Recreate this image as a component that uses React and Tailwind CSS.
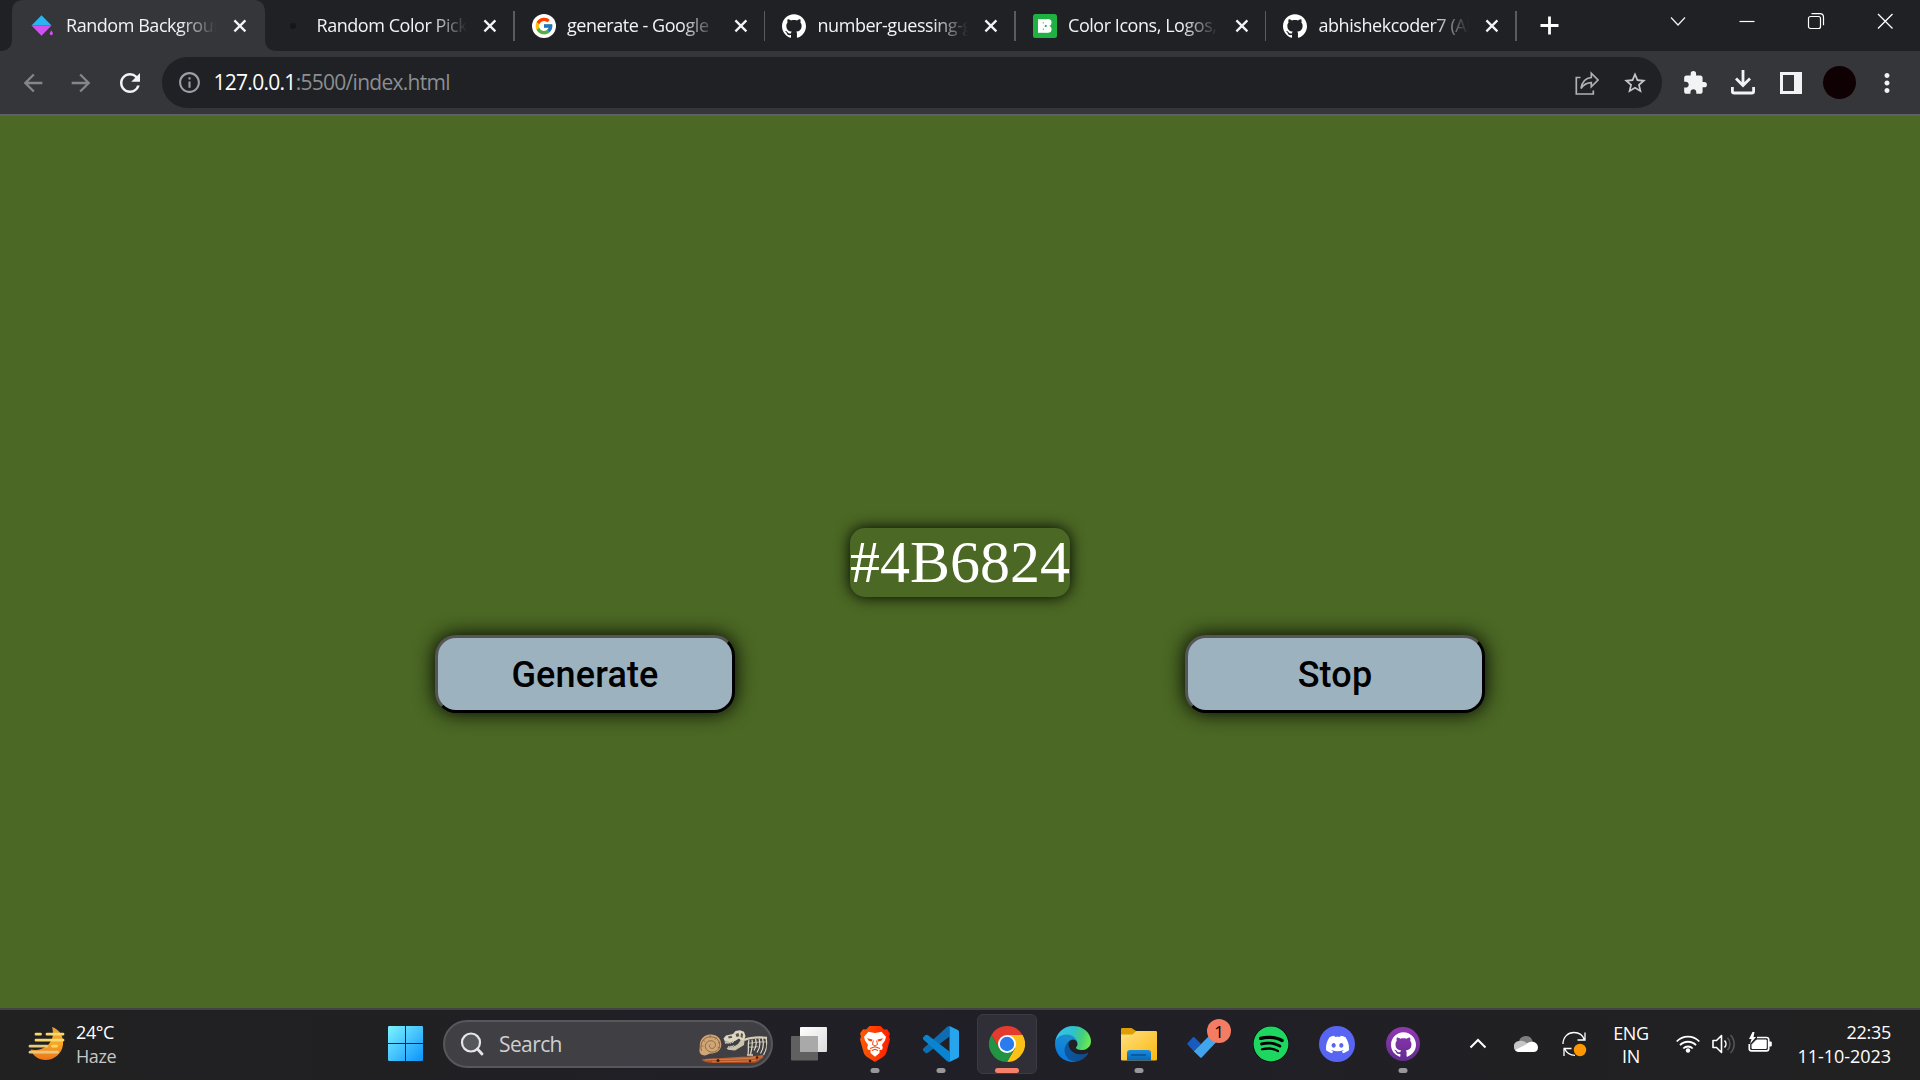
import React from "react";
import { MdArrowBack, MdArrowForward, MdRefresh, MdInfoOutline, MdStarBorder, MdExtension, MdMoreVert } from "react-icons/md";
import { FaSpotify } from "react-icons/fa";
import { FcGoogle } from "react-icons/fc";
import { SiDiscord, SiGithub } from "react-icons/si";

const PaintIcon = () => (
  <svg width="24" height="24" viewBox="0 0 24 24">
    <path d="M.5 11.5 10.5 1.2 20.5 11.5Z" fill="#29b6f0" />
    <path d="M.5 11.5h20L10.5 21.7Z" fill="#d150f2" />
    <path d="M20.3 16.6c1 1.4 1.6 2.2 1.6 3a1.6 1.6 0 0 1-3.2 0c0-.8.6-1.6 1.6-3Z" fill="#d150f2" />
  </svg>
);

const DotIcon = () => (
  <span className="flex size-6 items-center justify-center">
    <span className="size-1.5 rounded-full bg-[#141618]" />
  </span>
);

const GoogleIcon = () => (
  <span className="flex size-6 items-center justify-center rounded-full bg-white">
    <FcGoogle size={20} />
  </span>
);

const Icons8Icon = () => (
  <svg width="24" height="24" viewBox="0 0 24 24">
    <rect width="24" height="24" rx="2.5" fill="#1fb141" />
    <path d="M5 5.200h7.200v13.600H5Z" fill="#fff" />
    <circle cx="15" cy="8.600" r="3.500" fill="#fff" />
    <circle cx="15" cy="15.300" r="3.500" fill="#fff" />
    <path d="M12 5.500h2.500v4.500H12ZM12 14h2.500v4.800H12Z" fill="#fff" />
    <path d="M10.300 8v1.500M10.300 14.500V16" stroke="#1fb141" strokeWidth=".8" />
    <circle cx="12.700" cy="12" r="1.100" fill="#1fb141" />
  </svg>
);

const CrossIcon = () => (
  <svg width="14" height="14" viewBox="0 0 14 14" className="shrink-0">
    <path d="M1.4 1.4 12.4 12.4M12.4 1.4 1.4 12.4" stroke="#f1f3f4" strokeWidth="2.3" />
  </svg>
);

const tabs = [
  { title: "Random Backgroun", icon: <PaintIcon />, active: true },
  { title: "Random Color Pick", icon: <DotIcon /> },
  { title: "generate - Google", icon: <GoogleIcon /> },
  { title: "number-guessing-g", icon: <SiGithub size={24} color="#fff" /> },
  { title: "Color Icons, Logos,", icon: <Icons8Icon /> },
  { title: "abhishekcoder7 (Ab", icon: <SiGithub size={24} color="#fff" /> },
];

function Tab({ tab }) {
  return (
    <div className="relative flex h-[51px] w-[250.5px] shrink-0 items-center">
      {tab.active && (
        <svg className="absolute -left-[13.5px] top-0" width="290" height="51" viewBox="0 0 290 51">
          <path d="M0 51C8 51 12 47 12 39V12C12 4 16 0 24 0H253C261 0 265 4 265 12V39C265 47 269 51 277 51Z" fill="#35363a" />
        </svg>
      )}
      <div className="relative ml-[17px] mt-px flex w-6 shrink-0">{tab.icon}</div>
      <div className="relative mb-px ml-[11.5px] w-[150px] overflow-hidden whitespace-nowrap text-[18px] leading-6 tracking-[-0.45px] text-[#f1f3f4] [mask-image:linear-gradient(to_right,black_76%,transparent_100%)]">
        {tab.title}
      </div>
      <div className="relative ml-[16.5px] mt-px">
        <CrossIcon />
      </div>
      {!tab.active && <div className="absolute right-0 top-[11px] h-[30px] w-[1.5px] bg-[#5a5b5f]" />}
    </div>
  );
}

function WindowControls() {
  return (
    <div className="ml-auto mr-[26px] flex h-[42px] items-center gap-[51px]">
      <svg width="18" height="18" viewBox="0 0 18 18" fill="none" stroke="#f1f3f4" strokeWidth="1.2">
        <path d="m2 5.500 7 7.500 7-7.500" />
      </svg>
      <svg width="18" height="18" viewBox="0 0 18 18" fill="none" stroke="#fff" strokeWidth="1.2">
        <path d="M1.5 9.5h15" />
      </svg>
      <svg width="18" height="18" viewBox="0 0 18 18" fill="none" stroke="#fff" strokeWidth="1.2">
        <rect x="1.5" y="4.5" width="12" height="12" rx="2" />
        <path d="M4.5 1.7H13A3.6 3.6 0 0 1 16.5 5.2v8" />
      </svg>
      <svg width="18" height="18" viewBox="0 0 18 18" fill="none" stroke="#fff" strokeWidth="1.3">
        <path d="m2 2 14.5 14.5M16.5 2 2 16.5" />
      </svg>
    </div>
  );
}

function Toolbar() {
  return (
    <div className="flex h-[63px] items-center bg-[#35363a]">
      <div className="flex w-[162px] items-center gap-5 pl-[19px]">
        <MdArrowBack size={28} color="#85868a" />
        <MdArrowForward size={28} color="#85868a" />
        <MdRefresh size={30} color="#f1f3f4" />
      </div>
      <div className="flex h-[51px] w-[1500px] items-center rounded-full bg-[#202124] pl-[15px]">
        <MdInfoOutline size={25} color="#9aa0a6" />
        <div className="mb-px ml-[11.5px] text-[21px] leading-6 tracking-[-0.72px] text-[#8b8e92]">
          <span className="text-white">127.0.0.1</span>:5500/index.html
        </div>
        <div className="ml-auto mr-[14px] flex items-center gap-[23px]">
          <svg width="24" height="24" viewBox="0 0 24 24" fill="none" stroke="#b0b1b3" strokeWidth="1.7">
            <path d="M5.5 6.5H1.3V23h17v-3.5" />
            <path d="M6 17.5C7 11 11 7 16.3 6.500V2.200L23 9l-6.700 6.800v-4.200C12 11.600 9 13 6 17.500Z" />
          </svg>
          <MdStarBorder size={26} color="#c4c6c9" />
        </div>
      </div>
      <div className="ml-[20px] flex items-center">
        <MdExtension size={26} color="#f1f3f4" />
        <svg className="ml-[23px]" width="24" height="25" viewBox="0 0 24 25" fill="none" stroke="#f1f3f4" strokeWidth="2.800">
          <path d="M12 0v15M5 8.500l7 7 7-7M1.400 17v4.200a1.800 1.800 0 0 0 1.800 1.800h17.600a1.800 1.800 0 0 0 1.800-1.800V17" />
        </svg>
        <svg className="ml-[25px]" width="22" height="22" viewBox="0 0 22 22">
          <path d="M0 0h22v22H0ZM3 3v16h11V3Z" fill="#f1f3f4" fillRule="evenodd" />
        </svg>
        <div className="ml-[21px] size-[33px] rounded-full bg-[#0e0003]" />
        <MdMoreVert size={30} color="#f1f3f4" className="ml-[16px]" />
      </div>
    </div>
  );
}

function ActionButton({ children }) {
  return (
    <button className="h-[78px] w-[300px] rounded-[21px] border-[3px] border-b-black border-l-[#555] border-r-black border-t-[#555] bg-[#9db2bf] pt-px font-['Roboto'] text-[36px] font-medium leading-none tracking-[0.15px] text-black shadow-[0_0_20px_#000]">
      {children}
    </button>
  );
}

const WeatherIcon = () => (
  <svg width="38" height="36" viewBox="0 0 38 36">
    <defs>
      <linearGradient id="moon" x1="0" y1="0" x2="0" y2="1">
        <stop offset="0" stopColor="#e0a53a" />
        <stop offset=".5" stopColor="#f7a723" />
        <stop offset="1" stopColor="#ef7418" />
      </linearGradient>
    </defs>
    <path d="M24 1C31 3 36 10 35 18.500 34 28 26 34 17.500 34 11 34 5 30 2.500 23.500 8 24.500 15 24 20 19 25 14 26 7 24 1Z" fill="url(#moon)" />
    <path d="M8 8.200h4.500M19 8.200h16M8 14.200h27M24.500 20.200h4" stroke="#f8d76e" strokeWidth="2.800" strokeLinecap="round" />
    <path d="M2 20.200h17M2 26.200h27.500" stroke="#e8c983" strokeWidth="2.800" strokeLinecap="round" />
  </svg>
);

const WindowsLogo = () => (
  <svg width="36" height="36" viewBox="0 0 36 36">
    <defs>
      <linearGradient id="win" gradientUnits="userSpaceOnUse" x1="0" y1="0" x2="35" y2="35">
        <stop offset="0" stopColor="#7cf3ff" />
        <stop offset=".5" stopColor="#46c4fd" />
        <stop offset="1" stopColor="#0a93fb" />
      </linearGradient>
    </defs>
    <path fill="url(#win)" d="M1.200 0H17v17H0V1.200A1.200 1.200 0 0 1 1.200 0ZM18 0h15.800A1.200 1.200 0 0 1 35 1.200V17H18ZM0 18h17v17H1.200A1.200 1.200 0 0 1 0 33.800ZM18 18h17v15.800a1.200 1.200 0 0 1-1.200 1.200H18Z" />
  </svg>
);

const FossilArt = () => (
  <svg width="72" height="36" viewBox="0 0 72 36">
    <defs>
      <linearGradient id="log" x1="0" y1="0" x2="0" y2="1">
        <stop offset="0" stopColor="#c4703d" />
        <stop offset="1" stopColor="#a8481c" />
      </linearGradient>
    </defs>
    <path d="M4 29.500C10 28 22 28.500 32 27.500S52 27 65 25c1 2-1 4-3 4.500-1 2-3 3-6 3.500H12C8 32 4 31.500 4 29.500Z" fill="url(#log)" />
    <path d="M7 30c14-1 30 0 52-2.500M14 32c16-1 28 0 44-1.500" stroke="#e0945c" strokeWidth=".7" fill="none" />
    <circle cx="20" cy="30.500" r="1.500" fill="#3a1a0c" />
    <circle cx="52" cy="31" r="1.200" fill="#3a1a0c" />
    <circle cx="59" cy="27.500" r="1.200" fill="#3a1a0c" />
    <path d="M12 4.500C18 4 23.500 8 23.300 15c-.5 6.500-6 8.500-10.500 8.500-2 0-3 1.500-6 2C3 25.500 1 22.500 1.500 19.500c.5-2 0-3.500.5-6.500C3 8 7 5 12 4.500Z" fill="#cfa678" />
    <path d="M3.500 21C1 13 6 6.500 13 6.800c6 .2 9.500 4.700 8.500 9.700-1 4.500-5.500 6.500-9.500 5.300-4.500-1.300-6-5.800-3.500-9 2.300-3 7.200-2.600 8.600.4 1.200 2.700-.6 5.500-3.300 5.200-2.200-.2-3.200-2.600-1.600-4" stroke="#96683c" strokeWidth="1" fill="none" />
    <path d="M5 10 7 11.500M12 5l.3 2.500M18.500 7.500 17 9.500M22.500 12l-2.500 1M22 18l-2.500-1M3 16h2.500" stroke="#8a5f37" strokeWidth=".7" />
    <path d="M25.500 8.500 28 5.500 35 4 37.500 1 42 .3 46 1.800 47.500 6 46 11l-3-.500-2-2-4 2.500-5 1-5-.500Z" fill="#ddd7c2" />
    <path d="m30 6.500 3.500-.8.8 2-3.500.9ZM37.500 4l3-1 .8 3.200-2.800.8ZM43 3l2 1-.5 4-2-1Z" fill="#5a5447" />
    <path d="M43 9.500 46.500 10.500 46 15 42 17.500 37 20.500 30 19.800 28.500 18 35 17l5-3Z" fill="#cbc4ab" />
    <path d="m27 11.500.8 2.200 1.200-2 1 2 1.200-2.200 1 2 1.300-2.300 1 1.800 1.200-2M30 18l.8-1.800 1.200 1.500 1-1.800 1.200 1.300 1-1.800 1.200 1" stroke="#f0ead8" strokeWidth=".8" fill="none" />
    <path d="M46 10c6-2.500 14-3 23-2.200" stroke="#d4ceb9" strokeWidth="2.200" fill="none" />
    <path d="M50 13.500c6-1.500 13-1.800 18.500-1.500M50 17c4 0 7 .5 10-.5" stroke="#a29c88" strokeWidth="1.200" fill="none" />
    <path d="M51 10c-1.500 5 0 9-1 14.500M54 9.500c.8 5 0 9.500-1.500 15M57.500 9c1.500 5 .8 8-1.500 11.500M61 8.500c1.600 5 .8 10-2 14M64.500 8c1.500 6 1 11-2 15.500M68 8c1.500 7 1 11-2.500 17" stroke="#e0dbc9" strokeWidth="1.200" fill="none" />
    <path d="M49 25h6" stroke="#d8d2bf" strokeWidth="1.500" />
  </svg>
);

const TaskViewIcon = () => (
  <svg width="36" height="36" viewBox="0 0 36 36">
    <defs>
      <linearGradient id="tvFront" x1="0" y1="0" x2="1" y2="1">
        <stop offset="0" stopColor="#fff" />
        <stop offset="1" stopColor="#dcdcdc" />
      </linearGradient>
    </defs>
    <rect x="0" y="10" width="27" height="24.500" rx="1" fill="#606060" />
    <rect x="9" y="1" width="27" height="25" rx="1" fill="url(#tvFront)" />
    <rect x="9" y="10" width="18" height="16" fill="#a9a9a9" />
  </svg>
);

const BraveIcon = () => (
  <svg width="30" height="36" viewBox="0 0 30 36">
    <defs>
      <linearGradient id="brave" x1="0" y1="0" x2="1" y2="0">
        <stop offset="0" stopColor="#ff5a00" />
        <stop offset=".45" stopColor="#ff4000" />
        <stop offset="1" stopColor="#ff1f00" />
      </linearGradient>
    </defs>
    <path d="M9.500 0h11l3.500 3.500 3-.3L30 7.500l-1 3 1 3L26.500 26c-.6 2.500-2 4-4 5.300L15 36l-7.500-4.700c-2-1.300-3.400-2.800-4-5.300L0 13.500l1-3-1-3 3-4.300 3 .3Z" fill="url(#brave)" />
    <path d="M8.500 5.800 12 6.500 15 7l3-.5 3.500-.7L26 10.800l-1 3.700-3 4.200.8 3-.8 2-2.500.3L19.500 27 15 30.800 10.500 27l0-3L8 23.700l-.8-2 .8-3-3-4.200-1-3.700Z" fill="#fff" />
    <path d="M7 12.300 12.500 13.500 11.800 15.500 8.800 14.800ZM23 12.300 17.500 13.500 18.200 15.500 21.200 14.800Z" fill="#ff4000" />
    <path d="M13.300 14.500 12.500 18.500 15 20l2.500-1.500-.8-4" fill="none" stroke="#ff4000" strokeWidth="1" />
    <path d="M10 22.500 15 20.800l5 1.700M12 24.500l3-1.200 3 1.200" fill="none" stroke="#ff4000" strokeWidth="1.200" />
  </svg>
);

const CodeIcon = () => (
  <svg width="36" height="36" viewBox="0 0 36 36">
    <path d="M26.500 0v10.500L5 26.700a2.200 2.200 0 0 1-2.800 0L.600 25a1.800 1.800 0 0 1 0-2.700L24.500.600Z" fill="#0f6cb0" />
    <path d="M26.500 36V25.500L5 9.300a2.200 2.200 0 0 0-2.800 0L.600 11a1.800 1.800 0 0 0 0 2.700l23.900 21.700Z" fill="#0b84cf" />
    <path d="M26.500 0 34.800 4A2 2 0 0 1 36 5.900v24.200a2 2 0 0 1-1.200 1.900L26.500 36Z" fill="#27a4ee" />
  </svg>
);

const ChromeIcon = () => (
  <svg width="36" height="36" viewBox="0 0 48 48">
    <path d="M3.200 12A24 24 0 0 1 44.800 12H24L13.600 30Z" fill="#e33b2e" />
    <path d="M44.800 12A24 24 0 0 1 24 48L34.400 30 24 12Z" fill="#fbc116" />
    <path d="M24 48A24 24 0 0 1 3.200 12L13.600 30H34.400Z" fill="#229342" />
    <circle cx="24" cy="24" r="12" fill="#fff" />
    <circle cx="24" cy="24" r="9.600" fill="#2a7bf0" />
  </svg>
);

const EdgeIcon = () => (
  <svg width="36" height="36" viewBox="0 0 256 256">
    <defs>
      <linearGradient id="edgeA" gradientUnits="userSpaceOnUse" x1="60" y1="180" x2="235" y2="180">
        <stop offset="0" stopColor="#0c59a4" />
        <stop offset="1" stopColor="#114a8b" />
      </linearGradient>
      <linearGradient id="edgeB" gradientUnits="userSpaceOnUse" x1="100" y1="60" x2="50" y2="220">
        <stop offset="0" stopColor="#1b8fd0" />
        <stop offset="1" stopColor="#0a7bdc" />
      </linearGradient>
      <linearGradient id="edgeC" gradientUnits="userSpaceOnUse" x1="20" y1="40" x2="245" y2="110">
        <stop offset="0" stopColor="#35c1f1" />
        <stop offset=".45" stopColor="#2fc2c8" />
        <stop offset=".75" stopColor="#46ce7a" />
        <stop offset="1" stopColor="#66eb55" />
      </linearGradient>
    </defs>
    <path fill="url(#edgeA)" d="M231 190.500c-3.400 1.800-6.900 3.400-10.500 4.700a101.800 101.800 0 0 1-35.900 6.400c-47.300 0-88.500-32.500-88.500-74.300 0-11.400 6.400-21.900 16.400-27.300-42.800 1.800-53.800 46.400-53.800 72.500 0 74 68.100 81.400 82.800 81.400 7.900 0 19.800-2.300 27-4.600l1.300-.400a128.300 128.300 0 0 0 66.600-52.800 4 4 0 0 0-5.400-5.600z" />
    <path fill="url(#edgeB)" d="M105.700 241.400a79.200 79.200 0 0 1-22.700-21.300 80.700 80.700 0 0 1 29.500-120c3.200-1.500 8.500-4.100 15.600-4a32.400 32.400 0 0 1 25.700 13 31.900 31.900 0 0 1 6.300 18.700c0-.200 24.500-79.600-80-79.600-43.900 0-80 41.600-80 78.200a130.200 130.200 0 0 0 12.100 56 128 128 0 0 0 156.400 67 75.600 75.600 0 0 1-62.800-8z" />
    <path fill="url(#edgeC)" d="M152.300 148.900c-.900 1-3.400 2.500-3.400 5.600 0 2.600 1.700 5.200 4.800 7.300 14.300 10 41.400 8.600 41.500 8.600a59.600 59.600 0 0 0 30.300-8.300 61.400 61.400 0 0 0 30.400-52.900c.3-22.400-8-37.300-11.300-43.900C223.500 23.900 177.700 0 128 0A128 128 0 0 0 0 126.200c.500-36.500 36.800-66 80-66 3.500 0 23.500.300 42 10a72.600 72.600 0 0 1 30.900 29.300c6.100 10.600 7.200 24.100 7.200 29.500 0 5.400-2.700 13.300-7.800 19.900z" />
  </svg>
);

const FolderIcon = () => (
  <svg width="36" height="36" viewBox="0 0 36 36">
    <defs>
      <linearGradient id="folder" x1="0" y1="0" x2="1" y2="1">
        <stop offset="0" stopColor="#ffe082" />
        <stop offset="1" stopColor="#fbb80c" />
      </linearGradient>
      <linearGradient id="tray" x1="0" y1="0" x2="0" y2="1">
        <stop offset="0" stopColor="#1a8de0" />
        <stop offset="1" stopColor="#0b66b5" />
      </linearGradient>
    </defs>
    <path d="M0 3.200A1.200 1.200 0 0 1 1.200 2H10.500l5 3.200V12H0Z" fill="#dd9f05" />
    <path d="M0 8.500h11.500L15.300 5H34.800A1.200 1.200 0 0 1 36 6.200V33.300A1.200 1.200 0 0 1 34.800 34.500H1.200A1.200 1.200 0 0 1 0 33.300Z" fill="url(#folder)" />
    <path d="M6 34.500V27a3 3 0 0 1 3-3H27a3 3 0 0 1 3 3v7.500Z" fill="url(#tray)" />
    <path d="M10.500 29h14" stroke="#0b4f91" strokeWidth="1.400" strokeLinecap="round" />
  </svg>
);

const TodoIcon = () => (
  <svg width="36" height="36" viewBox="0 0 36 36">
    <path d="M.6 17 6 11.200a1 1 0 0 1 1.400 0L14 18l-7.200 7.200L.6 18.400a1 1 0 0 1 0-1.400Z" fill="#185abd" />
    <path d="M6.800 25.200 28.500 3.500a1 1 0 0 1 1.400 0L35 8.500a1 1 0 0 1 0 1.400L14.700 31.600a1 1 0 0 1-1.400 0Z" fill="#41a5ee" />
  </svg>
);

const SpotifyIcon = () => (
  <span className="flex size-[36px] rounded-full bg-black">
    <FaSpotify size={36} color="#1ed760" />
  </span>
);

const DiscordIcon = () => (
  <span className="flex size-9 items-center justify-center rounded-full bg-[#5865f2]">
    <SiDiscord size={23} color="#fff" />
  </span>
);

const GithubDesktopIcon = () => (
  <span className="flex size-[34px] items-center justify-center rounded-full bg-linear-to-b from-[#9437b3] to-[#612c90]">
    <SiGithub size={25} color="#fff" />
  </span>
);

const apps = [
  { icon: <BraveIcon />, open: true },
  { icon: <CodeIcon />, open: true },
  { icon: <ChromeIcon />, current: true },
  { icon: <EdgeIcon /> },
  { icon: <FolderIcon />, open: true },
  { icon: <TodoIcon />, badge: "1" },
  { icon: <SpotifyIcon /> },
  { icon: <DiscordIcon /> },
  { icon: <GithubDesktopIcon />, open: true },
];

function AppButton({ app }) {
  return (
    <div
      className={
        app.current
          ? "relative mx-[3px] flex size-[60px] items-center justify-center rounded-md border border-[#3c3b44] bg-[#302f37]"
          : "relative mx-[3px] flex size-[60px] items-center justify-center"
      }
    >
      {app.icon}
      {app.badge && (
        <div className="absolute left-[32px] top-[5px] flex size-6 items-center justify-center rounded-full bg-[#f47c62] text-[17px] leading-none text-black">
          {app.badge}
        </div>
      )}
      {app.open && <div className="absolute bottom-px left-1/2 h-[5px] w-[9px] -translate-x-1/2 rounded-full bg-[#98979b]" />}
      {app.current && <div className="absolute bottom-0 left-1/2 h-[5px] w-6 -translate-x-1/2 rounded-full bg-[#f6806a]" />}
    </div>
  );
}

function SystemTray() {
  return (
    <div className="ml-auto mr-[29px] flex h-full items-center text-white">
      <svg width="18" height="18" viewBox="0 0 18 18" fill="none" stroke="#fff" strokeWidth="2">
        <path d="m1.500 12.500 7.500-7.500 7.500 7.500" />
      </svg>
      <svg className="ml-[27px]" width="24" height="16" viewBox="0 0 24 16">
        <path d="M5 5.500A7 7 0 0 1 18.500 5L20 9 6 11Z" fill="#7e7e7e" />
        <path d="M5.500 16A5.500 5.500 0 0 1 5 5c4-.8 6 .6 8 2.500L20 13l-3 3Z" fill="#c6c6c6" />
        <path d="M12 8.500C15 4 24 5 24 11.500c0 3-2 4.500-4.500 4.500h-14C3.500 16 2 15.500 1 14Z" fill="#fff" />
      </svg>
      <svg className="ml-[24px]" width="25" height="26" viewBox="0 0 25 26" fill="none" stroke="#fff" strokeWidth="1.300">
        <path d="M1 13C1 6 6 1.500 12 1.500c5 0 9 3 10.500 7.500M23 1.500v7.500h-7.500M2 25v-7.500h7.500M2.500 17.500C4.500 22 8 24.300 13 24.300" />
        <circle cx="18" cy="19" r="6.200" fill="#ff9800" stroke="none" />
      </svg>
      <div className="mt-px ml-[26px] w-[36px] text-center text-[18px] leading-[23px] tracking-[-0.3px]">
        <div>ENG</div>
        <div>IN</div>
      </div>
      <svg className="ml-[27px]" width="24" height="18" viewBox="0 0 24 18" fill="none" stroke="#fff" strokeWidth="1.800">
        <path d="M.700 6.500A15.500 15.500 0 0 1 23.300 6.500M4 10.200a11 11 0 0 1 16 0M7.300 13.500a6.500 6.500 0 0 1 9.400 0" />
        <circle cx="12" cy="15.500" r="2.200" fill="#fff" stroke="none" />
      </svg>
      <svg className="ml-[12px]" width="24" height="22" viewBox="0 0 24 22" fill="none" stroke="#fff" strokeWidth="1.600">
        <path d="M1 7.500h3.500L9.500 2.500v17l-5-5H1Z" strokeLinejoin="round" />
        <path d="M12.500 7.500a5 5 0 0 1 0 7" />
        <path d="M15.500 4.800a9 9 0 0 1 0 12.400M18.500 2a13 13 0 0 1 0 18" stroke="#565656" />
      </svg>
      <svg className="mb-[3px] ml-[12px]" width="25" height="22" viewBox="0 0 25 22">
        <path d="M9 5.500h9.500a2.200 2.200 0 0 1 2.200 2.200v9a2.200 2.200 0 0 1-2.200 2.200h-15a2.200 2.200 0 0 1-2.200-2.200V12" fill="none" stroke="#fff" strokeWidth="1.700" />
        <path d="M8.500 8h9.700v8.500H4V12.500Z" fill="#fff" stroke="#fff" strokeLinejoin="round" />
        <path d="M21 9.500h1.800a1 1 0 0 1 1 1v3a1 1 0 0 1-1 1H21Z" fill="#fff" />
        <path d="M4.500 0 1 7h2.500L2 12l6-7H5.500l1-5Z" fill="#fff" />
      </svg>
      <div className="mb-px ml-[24px] w-[94px] whitespace-nowrap text-right text-[18px] leading-6 tracking-[-0.05px]">
        <div className="tracking-[-0.3px]">22:35</div>
        <div>11-10-2023</div>
      </div>
    </div>
  );
}

function Taskbar() {
  return (
    <div className="flex h-[72px] items-center border-t-2 border-[#434343] bg-linear-to-r from-[#212121] via-[#201f27] to-[#212121] pb-[2px]">
      <div className="flex w-[388px] items-center pl-[28px]">
        <WeatherIcon />
        <div className="mb-px ml-[10px] text-[18px] leading-6 tracking-[-0.4px] text-white">
          <div>24°C</div>
          <div className="text-[#c6c6c6]">Haze</div>
        </div>
      </div>
      <WindowsLogo />
      <div className="ml-[19px] flex h-[48px] w-[330px] items-center rounded-full border-2 border-[#58575c] bg-[#403f44] pl-[15px]">
        <svg width="24" height="24" viewBox="0 0 24 24" fill="none" stroke="#e4e6e8" strokeWidth="2.200" strokeLinecap="round">
          <circle cx="11" cy="10.500" r="9" fill="#55575b" />
          <path d="m17.500 17 4.500 5" strokeWidth="2.800" />
        </svg>
        <div className="ml-[15px] text-[21px] leading-7 tracking-[-0.6px] text-[#cfcfd1]">Search</div>
        <div className="ml-auto mr-px mt-2 flex">
          <FossilArt />
        </div>
      </div>
      <div className="ml-[18px] mr-[15px] flex">
        <TaskViewIcon />
      </div>
      <div className="flex">
        {apps.map((app, i) => (
          <AppButton key={i} app={app} />
        ))}
      </div>
      <SystemTray />
    </div>
  );
}

export default function App() {
  return (
    <div className="flex h-[1080px] w-[1920px] flex-col overflow-hidden bg-[#4b6824] font-['Open_Sans','Noto_Sans',sans-serif]">
      <div className="flex h-[51px] shrink-0 bg-[#202124] pl-[13.5px]">
        {tabs.map((tab) => (
          <Tab key={tab.title} tab={tab} />
        ))}
        <svg className="ml-[23px] mt-[16px]" width="19" height="19" viewBox="0 0 19 19">
          <path d="M9.500.500v18M.500 9.500h18" stroke="#fff" strokeWidth="2.800" />
        </svg>
        <WindowControls />
      </div>
      <Toolbar />
      <div className="h-[2px] shrink-0 bg-[#5f6064]" />
      <main className="flex flex-1 flex-col items-center pt-[412px]">
        <div className="h-[69px] rounded-[15px] font-['Liberation_Serif',serif] text-[60px] leading-[69px] text-white shadow-[0_0_15px_#000]">
          #4B6824
        </div>
        <div className="mt-[38px] flex w-[1500px] justify-around">
          <ActionButton>Generate</ActionButton>
          <ActionButton>Stop</ActionButton>
        </div>
      </main>
      <Taskbar />
    </div>
  );
}
